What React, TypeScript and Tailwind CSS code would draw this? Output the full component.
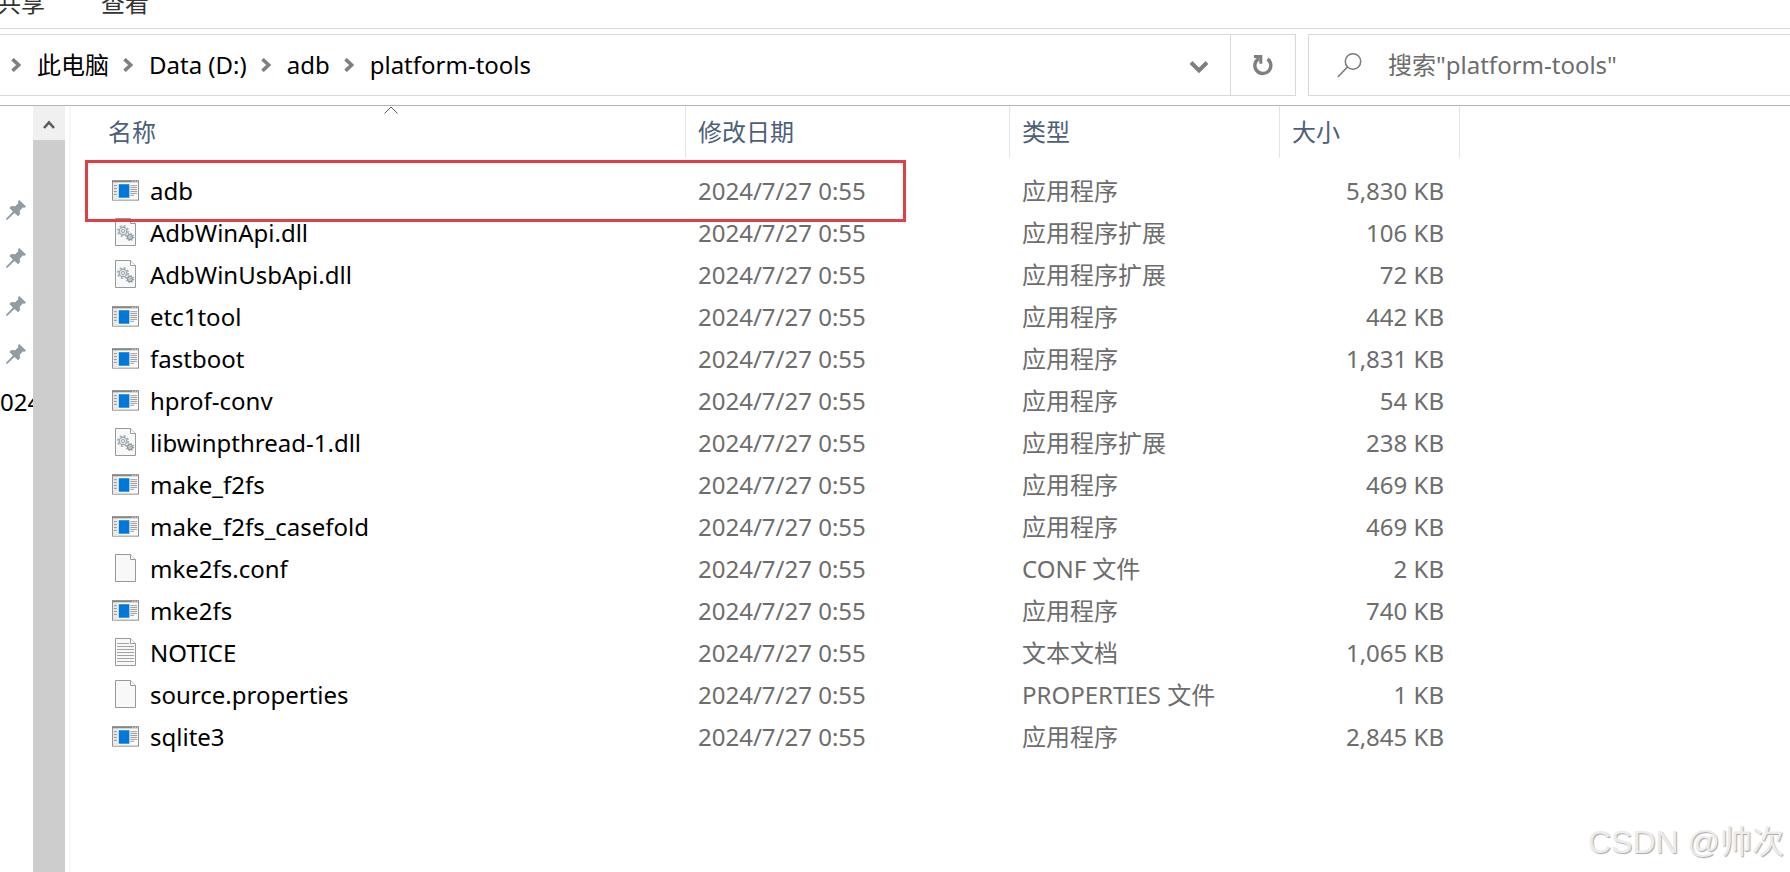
import React from 'react'

type FileKind = 'app' | 'dll' | 'blank' | 'text'

interface FileEntry {
  name: string
  kind: FileKind
  type: string
  size: string
}

const MODIFIED = '2024/7/27 0:55'

const files: FileEntry[] = [
  { name: 'adb', kind: 'app', type: '应用程序', size: '5,830 KB' },
  { name: 'AdbWinApi.dll', kind: 'dll', type: '应用程序扩展', size: '106 KB' },
  { name: 'AdbWinUsbApi.dll', kind: 'dll', type: '应用程序扩展', size: '72 KB' },
  { name: 'etc1tool', kind: 'app', type: '应用程序', size: '442 KB' },
  { name: 'fastboot', kind: 'app', type: '应用程序', size: '1,831 KB' },
  { name: 'hprof-conv', kind: 'app', type: '应用程序', size: '54 KB' },
  { name: 'libwinpthread-1.dll', kind: 'dll', type: '应用程序扩展', size: '238 KB' },
  { name: 'make_f2fs', kind: 'app', type: '应用程序', size: '469 KB' },
  { name: 'make_f2fs_casefold', kind: 'app', type: '应用程序', size: '469 KB' },
  { name: 'mke2fs.conf', kind: 'blank', type: 'CONF 文件', size: '2 KB' },
  { name: 'mke2fs', kind: 'app', type: '应用程序', size: '740 KB' },
  { name: 'NOTICE', kind: 'text', type: '文本文档', size: '1,065 KB' },
  { name: 'source.properties', kind: 'blank', type: 'PROPERTIES 文件', size: '1 KB' },
  { name: 'sqlite3', kind: 'app', type: '应用程序', size: '2,845 KB' },
]

const crumbs = ['此电脑', 'Data (D:)', 'adb', 'platform-tools']

const pins = ['pin-1', 'pin-2', 'pin-3', 'pin-4']

function AppIcon() {
  return (
    <svg width="28" height="21" viewBox="0 0 28 21" aria-hidden="true">
      <rect x="0.5" y="0.5" width="27" height="20" fill="#fafafa" stroke="#8c8c8c" />
      <rect x="1" y="2" width="5" height="18" fill="#e9e9e9" />
      <rect x="0" y="0" width="28" height="2" fill="#868686" />
      <path d="M21 1h1M23.500 1h1M26 1h1" stroke="#fff" />
      <rect x="7" y="4" width="11" height="14" fill="#0078d7" />
      <path d="M2 5.500h3M2 8.500h3M2 11.500h3M2 14.500h3" stroke="#8f8f8f" />
      <path d="M19 5.500h7M19 7.500h7M19 9.500h7M19 11.500h7M19 13.500h7M19 15.500h4" stroke="#999" />
    </svg>
  )
}

function PageIcon({ children }: { children?: React.ReactNode }) {
  return (
    <svg width="21" height="28" viewBox="0 0 21 28" aria-hidden="true">
      <path d="M0.500 0.500h15l5 5v22h-20z" fill="#f8f8f8" stroke="#999" />
      <path d="M15.500 0.500v5h5" fill="#fff" stroke="#999" />
      {children}
    </svg>
  )
}

function FileIcon({ kind }: { kind: FileKind }) {
  if (kind === 'app') return <AppIcon />
  if (kind === 'dll') {
    return (
      <PageIcon>
        <circle cx="8" cy="13" r="5.200" fill="none" stroke="#a3adb3" strokeWidth="1.600" strokeDasharray="2.040 2.040" />
        <circle cx="8" cy="13" r="3.800" fill="#dde3e6" stroke="#98a3a9" strokeWidth="1.200" />
        <circle cx="8" cy="13" r="1.500" fill="#fff" stroke="#98a3a9" />
        <circle cx="15" cy="19" r="3.500" fill="none" stroke="#98a3a9" strokeWidth="1.400" strokeDasharray="1.370 1.370" />
        <circle cx="15" cy="19" r="2.500" fill="#cfd6da" stroke="#8b969d" strokeWidth="1.200" />
        <circle cx="15" cy="19" r="0.900" fill="#fff" stroke="#8b969d" strokeWidth="0.600" />
      </PageIcon>
    )
  }
  if (kind === 'text') {
    return (
      <PageIcon>
        <path
          d="M2 5.500h12M2 8.500h17M2 11.500h17M2 14.500h17M2 17.500h17M2 20.500h17M2 23.500h17"
          stroke="#a3a3a3"
        />
      </PageIcon>
    )
  }
  return <PageIcon />
}

function PinIcon() {
  return (
    <svg width="20" height="20" viewBox="0 0 20 20" fill="#929ca3" aria-hidden="true">
      <path d="M13.200 0L20 6.400L18.600 7.800L16.800 7.600L13.800 10.800L14 14.200L12 16.200L8.500 13L1.400 19.700L0 20L0.300 18.600L6.900 11.500L3.400 7.900L5.400 5.900L9.200 6.200L12.300 3.200L12 1.200Z" />
    </svg>
  )
}

function CrumbArrow() {
  return (
    <svg width="10" height="14" viewBox="0 0 10 14" fill="none" className="shrink-0" aria-hidden="true">
      <path d="M1.500 1.200L7.700 7L1.500 12.800" stroke="#7f7f7f" strokeWidth="3.600" />
    </svg>
  )
}

export default function App() {
  return (
    <div className="relative flex min-h-screen flex-col overflow-hidden bg-white font-['Noto_Sans','Noto_Sans_CJK_SC',sans-serif] text-2xl text-black">
      {/* ribbon tabs, scrolled half out of view */}
      <nav className="-ml-1 flex h-[29px] items-end gap-14 overflow-hidden border-b border-[#d9d9d9] pl-px text-[#333]">
        <button type="button" className="h-[50px] shrink-0">共享</button>
        <button type="button" className="h-[50px] shrink-0">查看</button>
      </nav>

      <header className="flex gap-3 border-b border-[#b5b5b5] pt-[5px] pb-[9px]">
        <div className="flex h-[62px] min-w-0 flex-1 border border-l-0 border-[#d9d9d9]">
          <ol className="flex min-w-0 flex-1 items-center gap-[14px] pl-[11px]">
            {crumbs.map((crumb) => (
              <li key={crumb} className="flex items-center gap-4">
                <CrumbArrow />
                <a href="#" className="whitespace-nowrap">{crumb}</a>
              </li>
            ))}
          </ol>
          <button type="button" aria-label="以前的位置" className="flex w-[62px] items-center justify-center pt-1">
            <svg width="20" height="14" viewBox="0 0 20 14" fill="none">
              <path d="M2 2.500L10 10.500L18 2.500" stroke="#7f7f7f" strokeWidth="4" />
            </svg>
          </button>
          <button
            type="button"
            aria-label="刷新"
            className="flex w-[65px] items-center justify-center border-l border-[#d9d9d9]"
          >
            <svg width="22" height="22" viewBox="0 0 22 22" fill="none">
              <path d="M15.500 5A8 8 0 1 1 7 4.500" stroke="#7f7f7f" strokeWidth="3.400" />
              <path d="M2 2.500H8.800V9.800" stroke="#7f7f7f" strokeWidth="3" />
            </svg>
          </button>
        </div>
        <form role="search" className="flex w-[482px] items-center gap-[26px] border border-r-0 border-[#d9d9d9] pl-7">
          <svg width="25" height="25" viewBox="0 0 25 25" fill="none" className="shrink-0" aria-hidden="true">
            <circle cx="16" cy="8.500" r="7.700" stroke="#7a7a7a" strokeWidth="1.500" />
            <path d="M10.500 14L0.800 24" stroke="#7a7a7a" strokeWidth="1.600" />
          </svg>
          <input
            type="text"
            aria-label="搜索"
            placeholder={'搜索"platform-tools"'}
            className="min-w-0 flex-1 outline-none placeholder:text-[#6d6d6d]"
          />
        </form>
      </header>

      <div className="flex flex-1">
        <aside className="w-[33px] shrink-0 overflow-hidden pt-20">
          <ul>
            {pins.map((pin) => (
              <li key={pin} className="flex h-12 items-center pl-[6px]">
                <PinIcon />
              </li>
            ))}
            <li className="flex h-12 items-center">024</li>
          </ul>
        </aside>

        <div className="flex w-8 shrink-0 flex-col bg-[#cdcdcd]">
          <button type="button" aria-label="向上滚动" className="flex h-[34px] items-center justify-center bg-[#f0f0f0] pt-1">
            <svg width="12" height="10" viewBox="0 0 12 10" fill="none">
              <path d="M1 8L6 2.500L11 8" stroke="#5a5a5a" strokeWidth="2.600" />
            </svg>
          </button>
        </div>

        <main className="relative ml-1 flex-1 border-l-2 border-[#f7f7f7] pl-[25px]">
          <table className="w-[1364px] table-fixed text-left whitespace-nowrap">
            <colgroup>
              <col className="w-[590px]" />
              <col className="w-[324px]" />
              <col className="w-[270px]" />
              <col className="w-[180px]" />
            </colgroup>
            <thead className="text-[#4c607a]">
              <tr>
                <th className="h-16 p-0 align-top font-normal" aria-sort="ascending">
                  <div className="relative flex h-[52px] items-center border-r border-[#e5e5e5] pl-3">
                    名称
                    <svg
                      width="14"
                      height="8"
                      viewBox="0 0 14 8"
                      fill="none"
                      className="absolute inset-x-0 top-0 mx-auto"
                      aria-hidden="true"
                    >
                      <path d="M0.500 7.500L7 1L13.500 7.500" stroke="#5a5a5a" />
                    </svg>
                  </div>
                </th>
                {['修改日期', '类型', '大小'].map((title) => (
                  <th key={title} className="h-16 p-0 align-top font-normal">
                    <div className="flex h-[52px] items-center border-r border-[#e5e5e5] pl-3">{title}</div>
                  </th>
                ))}
              </tr>
            </thead>
            <tbody className="leading-6 text-[#6d6d6d]">
              {files.map((file) => (
                <tr key={file.name} className="h-[42px]">
                  <td className="p-0 pl-4 text-black">
                    <div className="flex items-center gap-[10px]">
                      <span className="flex w-7 justify-center pr-px pb-[2px]">
                        <FileIcon kind={file.kind} />
                      </span>
                      {file.name}
                    </div>
                  </td>
                  <td className="p-0 pl-3">{MODIFIED}</td>
                  <td className="p-0 pl-3">{file.type}</td>
                  <td className="p-0 pr-4 text-right">{file.size}</td>
                </tr>
              ))}
            </tbody>
          </table>

          {/* red frame round the adb row */}
          <div className="pointer-events-none absolute top-[54px] left-[14px] h-[62px] w-[821px] border-3 border-[#e04044]" />
        </main>
      </div>

      <div className="pointer-events-none absolute right-[6px] bottom-[6px] font-['Liberation_Sans','Noto_Sans_CJK_SC',sans-serif] text-[32px] leading-[48px] text-[#ececec] [text-shadow:1px_1px_1px_#a8a8a8]">
        CSDN @帅次
      </div>
    </div>
  )
}
